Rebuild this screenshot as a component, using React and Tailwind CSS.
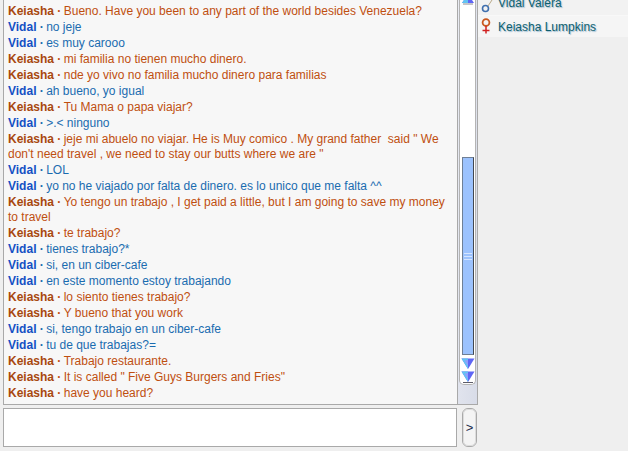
import React from 'react';

const messages = [
  ['K', 'Bueno. Have you been to any part of the world besides Venezuela?'],
  ['V', 'no jeje'],
  ['V', 'es muy carooo'],
  ['K', 'mi familia no tienen mucho dinero.'],
  ['K', 'nde yo vivo no familia mucho dinero para familias'],
  ['V', 'ah bueno, yo igual'],
  ['K', 'Tu Mama o papa viajar?'],
  ['V', '>.< ninguno'],
  ['K', 'jeje mi abuelo no viajar. He is Muy comico . My grand father  said " We don\'t need travel , we need to stay our butts where we are "'],
  ['V', 'LOL'],
  ['V', 'yo no he viajado por falta de dinero. es lo unico que me falta ^^'],
  ['K', 'Yo tengo un trabajo , I get paid a little, but I am going to save my money to travel'],
  ['K', 'te trabajo?'],
  ['V', 'tienes trabajo?*'],
  ['V', 'si, en un ciber-cafe'],
  ['V', 'en este momento estoy trabajando'],
  ['K', 'lo siento tienes trabajo?'],
  ['K', 'Y bueno that you work'],
  ['V', 'si, tengo trabajo en un ciber-cafe'],
  ['V', 'tu de que trabajas?='],
  ['K', 'Trabajo restaurante.'],
  ['K', 'It is called " Five Guys Burgers and Fries"'],
  ['K', 'have you heard?'],
];

const Arrow = ({ bar }) => (
  <svg width="14" height="13" viewBox="0 0 14 13" className="shrink-0">
    <path d="M0.5 0.5h13L7 11z" fill="#5f66f5" />
    <path d="M0.5 0.5H7V11z" fill="#62c4f2" />
    <path d="M7 2L3.5 2.5 7 8z" fill="#8fa0fb" />
    {bar && <path d="M2 11.5h10" stroke="#5c5c68" strokeWidth="1" />}
  </svg>
);

export default function App() {
  return (
    <div className="w-[628px] h-[451px] overflow-hidden flex bg-[#efefef] font-['Liberation_Sans',Arial,sans-serif] text-[12px] leading-4">
      <div className="w-[478px] shrink-0 flex flex-col">
        <div className="h-[405px] flex">
          <div className="w-[455px] ml-[3px] pl-1 pr-[9px] pt-1 bg-[#f7f7f7] border-x border-b border-[#a9a9a9] overflow-hidden">
            {messages.map(([who, text], i) => (
              <div key={i} className={who === 'K' ? 'text-[#bf4f10] whitespace-pre-wrap leading-[15px] pb-px' : 'text-[#1a6cb0] whitespace-pre-wrap leading-[15px] pb-px'}>
                <b className={who === 'K' ? 'text-[#a8480f]' : 'text-[#1450c4]'}>{who === 'K' ? 'Keiasha' : 'Vidal'}</b>
                <span className="-mr-px inline-block whitespace-pre font-bold">{' · '}</span>
                {text}
              </div>
            ))}
          </div>
          <div className="w-5 pr-px flex flex-col border-r border-b border-[#a9a9a9] bg-gradient-to-br from-[#e9ebf2] to-[#d8dce8]">
            <div className="h-[385px] ml-px w-[17px] bg-white rounded-b-[5px] border-x border-b border-[#b4b4b4] flex flex-col overflow-hidden">
              <svg width="14" height="5" viewBox="0 0 14 5" className="shrink-0 ml-[1px]">
                <path d="M3 0h8l2 3H1z" fill="#5f66f5" />
                <path d="M3 0h4v3H1z" fill="#62c4f2" />
                <path d="M2 4h10" stroke="#8a8a94" strokeWidth="1" />
              </svg>
              <div className="h-[152px] shrink-0" />
              <div className="ml-[2px] w-3 h-[198px] shrink-0 bg-[#9cc2fd] border border-[#6f7f95] border-r-[#44484f] flex flex-col items-center justify-center gap-[2px]">
                <div className="w-[8px] h-px bg-[#d5e5ff]" />
                <div className="w-[8px] h-px bg-[#d5e5ff]" />
                <div className="w-[8px] h-px bg-[#d5e5ff]" />
              </div>
              <div className="mt-[3px] ml-px h-[13px]"><Arrow /></div>
              <div className="ml-px h-[13px]"><Arrow bar /></div>
            </div>
          </div>
        </div>
        <div className="flex mt-[3px]">
          <div className="w-[454px] h-[39px] ml-[3px] bg-white border border-[#a9a9a9]" />
          <div className="ml-[5px] w-[15px] h-[39px] rounded-[6px] border border-[#a9a9a9] bg-[#f4f4f4] flex items-center justify-center text-[#1b2a4a] text-[13px]">
            <div className="w-[13px] h-[37px] rounded-[5px] border border-[#dcdcdc] flex items-center justify-center">&gt;</div>
          </div>
        </div>
      </div>
      <div className="flex-1 flex flex-col text-[#0f5f6e] [text-shadow:1px_1px_1px_rgba(50,120,170,0.45)]">
        <div className="h-4 pl-5 pb-1.5 flex items-end overflow-hidden border-b border-[#f8f8f8] bg-[#f2f2f2] relative">
          <svg width="14" height="13" viewBox="0 0 14 13" className="absolute left-[3px] top-0">
            <circle cx="4.5" cy="8.5" r="3" fill="none" stroke="#3f6fae" strokeWidth="1.6" />
            <path d="M7 6l4-6" stroke="#b8a888" strokeWidth="1" />
          </svg>
          <span className="leading-4 -mb-[2px]">Vidal Valera</span>
        </div>
        <div className="h-[21px] pl-5 flex items-center bg-[#f5f5f5] relative">
          <svg width="11" height="16" viewBox="0 0 11 16" className="absolute left-[3px] top-[2px]">
            <circle cx="5" cy="4.5" r="3.4" fill="none" stroke="#c9581f" strokeWidth="1.8" />
            <path d="M5 8v7.5M1.5 12.5h7" stroke="#d02020" strokeWidth="1.5" />
          </svg>
          Keiasha Lumpkins
        </div>
      </div>
    </div>
  );
}
